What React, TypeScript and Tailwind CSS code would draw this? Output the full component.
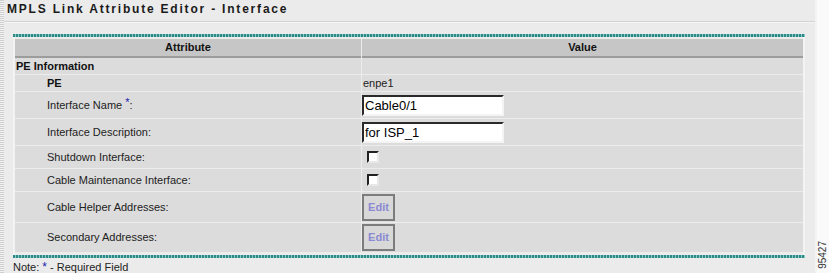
import React from "react";

const rows: { label: string; kind: "text" | "input" | "check" | "edit"; value?: string; req?: boolean; h: string }[] = [
    { label: "PE", kind: "text", value: "enpe1", h: "h-[16px]" },
    { label: "Interface Name", kind: "input", value: "Cable0/1", req: true, h: "h-[26px]" },
    { label: "Interface Description:", kind: "input", value: "for ISP_1", h: "h-[26px]" },
    { label: "Shutdown Interface:", kind: "check", h: "h-[22px]" },
    { label: "Cable Maintenance Interface:", kind: "check", h: "h-[22px]" },
    { label: "Cable Helper Addresses:", kind: "edit", h: "h-[30px]" },
    { label: "Secondary Addresses:", kind: "edit", h: "h-[29px]" },
];

const Value = ({ kind, value }: { kind: string; value?: string }) => {
    if (kind === "text") return <span className="pl-[1px] text-[11px] text-[#222]">{value}</span>;
    if (kind === "input")
        return (
            <input
                readOnly
                value={value}
                className="w-[142px] h-[21px] bg-white border-2 border-t-[#2a2a2a] border-l-[#2a2a2a] border-b-[#f4f4f4] border-r-[#f4f4f4] px-[1px] text-[13px] text-black outline-none"
            />
        );
    if (kind === "check")
        return (
            <div className="ml-[5px] w-[12px] h-[12px] bg-white border-2 border-t-[#222] border-l-[#222] border-b-[#e8e8e8] border-r-[#e8e8e8]" />
        );
    return (
        <button
            type="button"
            className="w-[33px] h-[27px] border-2 border-[#7c7c7c] bg-[#d8d8d8] text-[11px] font-bold text-[#8a8ad2]"
        >
            Edit
        </button>
    );
};

const App = () => {
    return (
        <div className="flex w-[829px] h-[273px] overflow-hidden bg-[#ebebeb] font-['Liberation_Sans',Arial,sans-serif] text-[#222]">
            <div className="w-[4px] shrink-0 bg-[repeating-linear-gradient(0deg,#cfcfcf_0px,#cfcfcf_1px,#f2f2f2_1px,#f2f2f2_2px)]" />

            <div className="w-[811px] shrink-0">
                <h1 className="h-[21px] pl-[3px] pt-[3px] text-[12px] leading-[12px] font-bold tracking-[1.8px] text-[#1a1a1a]">
                    MPLS Link Attribute Editor - Interface
                </h1>
                <div className="h-px bg-[#d2d2d2]" />
                <div className="h-px bg-[#f6f6f6]" />

                <div className="mt-[11px] ml-[9px] w-[792px]">
                    <div className="h-[3px] bg-[repeating-linear-gradient(90deg,#2b8a85_0px,#2b8a85_2px,#8cc8c4_2px,#8cc8c4_3px)]" />
                    <div className="border-x-2 border-[#f3f3f3] bg-[#ececec] pt-[2px] pb-[3px]">
                        <div className="grid grid-cols-[346px_441px] gap-x-px">
                            <div className="h-[19px] flex items-center justify-center bg-[#c6c6c6] border-b-2 border-[#9c9c9c] text-[11px] font-bold text-[#111]">
                                Attribute
                            </div>
                            <div className="h-[19px] flex items-center justify-center bg-[#c6c6c6] border-b-2 border-[#9c9c9c] text-[11px] font-bold text-[#111]">
                                Value
                            </div>
                        </div>
                        <div className="grid grid-cols-[346px_441px] gap-px">
                            <div className="h-[16px] flex items-center pl-[1px] bg-[#dcdcdc] text-[11px] font-bold text-[#111]">
                                PE Information
                            </div>
                            <div className="h-[16px] bg-[#dcdcdc]" />
                            {rows.map((r) => (
                                <React.Fragment key={r.label}>
                                    <div
                                        className={`${r.h} flex items-center pl-[32px] bg-[#dcdcdc] text-[11px] ${
                                            r.kind === "text" ? "font-bold text-[#111]" : "text-[#222]"
                                        }`}
                                    >
                                        {r.label}
                                        {r.req && (
                                            <>
                                                &nbsp;<sup className="text-[11px] text-[#1a1ab0] -top-[3px]">*</sup>:
                                            </>
                                        )}
                                    </div>
                                    <div className={`${r.h} flex items-center bg-[#dcdcdc]`}>
                                        <Value kind={r.kind} value={r.value} />
                                    </div>
                                </React.Fragment>
                            ))}
                        </div>
                    </div>
                    <div className="h-[3px] bg-[repeating-linear-gradient(90deg,#2b8a85_0px,#2b8a85_2px,#8cc8c4_2px,#8cc8c4_3px)]" />
                </div>

                <p className="mt-[3px] ml-[9px] text-[11px] leading-[12px] text-[#222]">
                    Note: <span className="text-[#1a1ab0] text-[12px]">*</span> - Required Field
                </p>
            </div>

            <div className="flex-1 flex items-end justify-center pb-[4px] border-l-2 border-[#f3f3f3] bg-[#fafafa]">
                <span className="[writing-mode:vertical-rl] rotate-180 text-[10px] leading-[10px] text-[#333]">
                    95427
                </span>
            </div>
        </div>
    );
};

export default App;
